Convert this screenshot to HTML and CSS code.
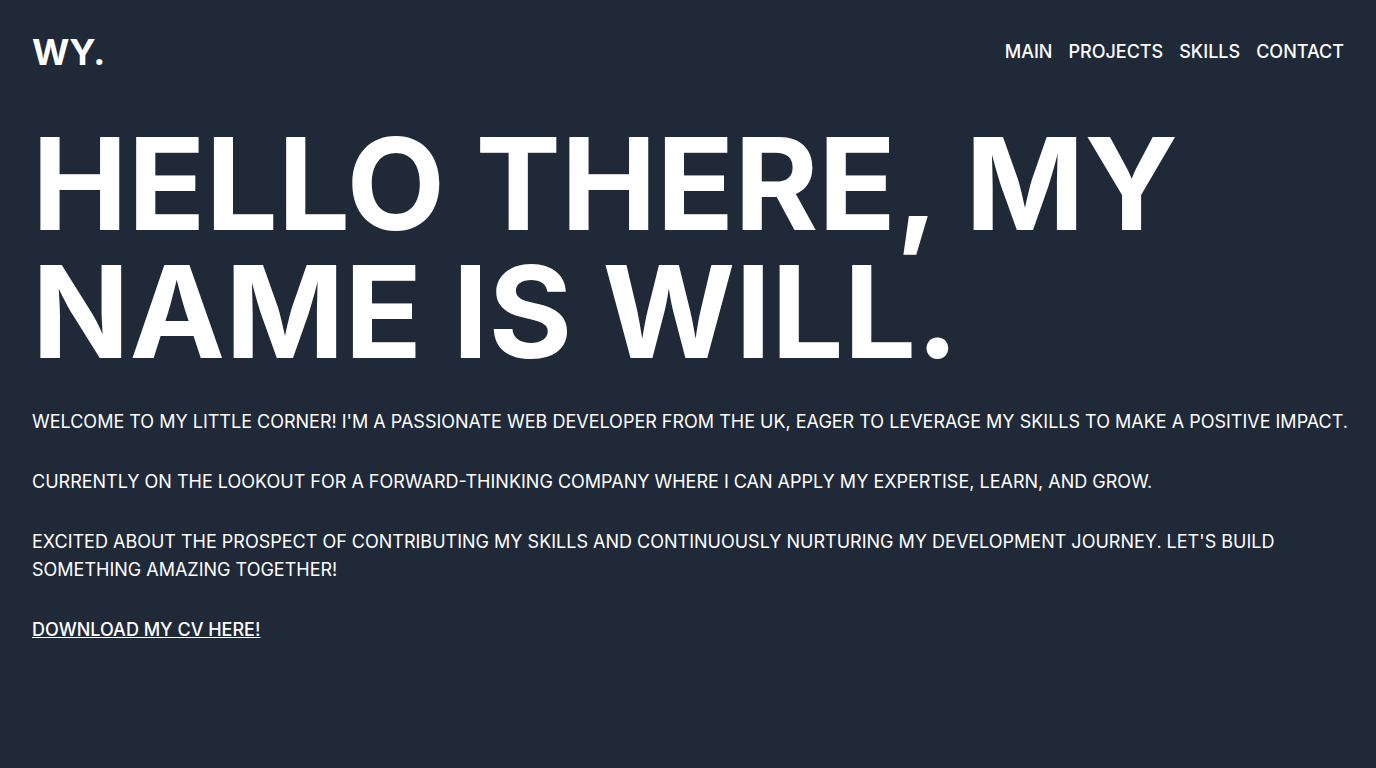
FILE: index.html
```html
<!DOCTYPE html>
<html lang="en">
<head>
<meta charset="utf-8">
<meta name="viewport" content="width=device-width, initial-scale=1">
<title>WY.</title>
<link rel="stylesheet" href="styles.css">
</head>
<body>
<header class="header">
  <a class="logo" href="#main">WY.</a>
  <nav class="nav" aria-label="Primary">
    <a href="#main">MAIN</a>
    <a href="#projects">PROJECTS</a>
    <a href="#skills">SKILLS</a>
    <a href="#contact">CONTACT</a>
  </nav>
</header>
<main class="hero" id="main">
  <h1 class="title">HELLO THERE, MY NAME IS WILL.</h1>
  <div class="intro">
    <p>WELCOME TO MY LITTLE CORNER! I'M A PASSIONATE WEB DEVELOPER FROM THE UK, EAGER TO LEVERAGE MY SKILLS TO MAKE A POSITIVE IMPACT.</p>
    <p>CURRENTLY ON THE LOOKOUT FOR A FORWARD-THINKING COMPANY WHERE I CAN APPLY MY EXPERTISE, LEARN, AND GROW.</p>
    <p>EXCITED ABOUT THE PROSPECT OF CONTRIBUTING MY SKILLS AND CONTINUOUSLY NURTURING MY DEVELOPMENT JOURNEY. LET'S BUILD SOMETHING AMAZING TOGETHER!</p>
    <a class="download" href="#cv">DOWNLOAD MY CV HERE!</a>
  </div>
</main>
</body>
</html>
```
FILE: styles.css
```css
* {
  box-sizing: border-box;
  margin: 0;
}

body {
  min-height: 100vh;
  background: #1f2937;
  color: #fff;
  font-family: Inter, sans-serif;
  font-size: 18px;
  line-height: 28px;
}

a {
  color: inherit;
  text-decoration: none;
}

.header {
  display: flex;
  align-items: center;
  justify-content: space-between;
  padding: 32px;
}

.logo {
  font-size: 36px;
  font-weight: 700;
  line-height: 40px;
}

.nav {
  display: flex;
  flex-wrap: wrap;
  gap: 16px;
  font-weight: 500;
}

.hero {
  padding: 16px 24px 32px 32px;
}

.title {
  font-size: 128px;
  font-weight: 700;
  line-height: 1;
}

.intro {
  display: flex;
  flex-direction: column;
  align-items: flex-start;
  gap: 32px;
  padding-top: 32px;
}

.download {
  font-weight: 500;
  text-decoration: underline;
}
```
